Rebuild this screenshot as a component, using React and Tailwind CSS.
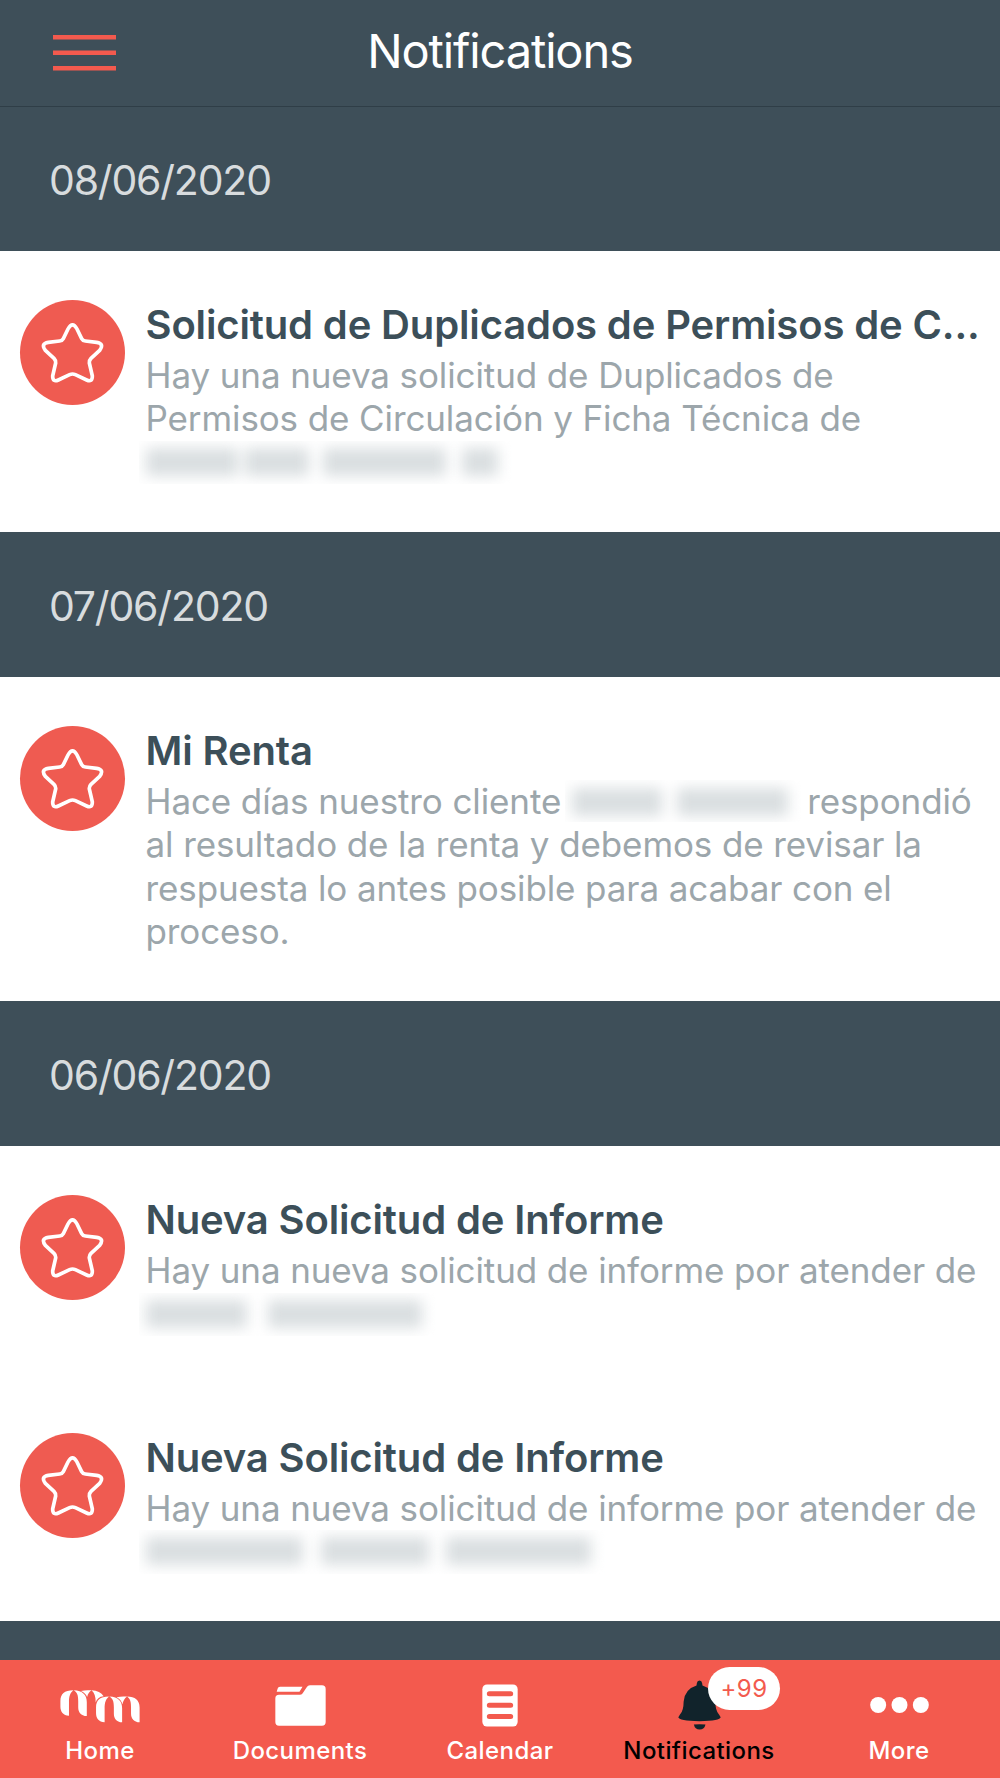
import React from 'react';

const groups = [
  {
    date: '08/06/2020',
    items: [
      {
        title: 'Solicitud de Duplicados de Permisos de C...',
        lines: [
          'Hay una nueva solicitud de Duplicados de',
          'Permisos de Circulación y Ficha Técnica de',
        ],
        hidden: 'company',
      },
    ],
  },
  {
    date: '07/06/2020',
    items: [
      {
        title: 'Mi Renta',
        lines: [
          <>Hace días nuestro cliente<HiddenClient />respondió</>,
          'al resultado de la renta y debemos de revisar la',
          'respuesta lo antes posible para acabar con el',
          'proceso.',
        ],
      },
    ],
  },
  {
    date: '06/06/2020',
    items: [
      {
        title: 'Nueva Solicitud de Informe',
        lines: ['Hay una nueva solicitud de informe por atender de'],
        hidden: 'short',
      },
      {
        title: 'Nueva Solicitud de Informe',
        lines: ['Hay una nueva solicitud de informe por atender de'],
        hidden: 'long',
      },
    ],
  },
];

const hiddenWords = {
  company: ['w-[92px]', 'ml-[7px] w-[64px]', 'ml-[14px] w-[123px]', 'ml-[16px] w-[36px]'],
  short: ['w-[101px]', 'ml-[21px] w-[154px]'],
  long: ['w-[157px]', 'ml-[18px] w-[108px]', 'ml-[17px] w-[145px]'],
};

// Blurred stand-in for a private name
function HiddenLine({ kind }) {
  return (
    <div className="-ml-[7px] flex h-[43.400px] w-[480px] overflow-hidden pl-[7px] pt-[7px]">
      <div className="flex blur-[7px]">
        {hiddenWords[kind].map((word) => (
          <span key={word} className={`h-[28px] bg-[#dadfe1] ${word}`} />
        ))}
      </div>
    </div>
  );
}

function HiddenClient() {
  return (
    <span className="ml-[4px] mr-[6px] inline-flex h-[42px] w-[236px] overflow-hidden pl-[7px] pt-[8px] align-top">
      <span className="flex blur-[7px]">
        <span className="h-[28px] w-[90px] bg-[#dadfe1]" />
        <span className="ml-[15px] h-[28px] w-[111px] bg-[#dadfe1]" />
      </span>
    </span>
  );
}

function StarBadge() {
  return (
    <div className="mt-[49px] h-[105px] w-[105px] shrink-0 rounded-full bg-[#ef5b51]">
      <svg viewBox="0 0 315 315" className="h-full w-full" fill="none" stroke="#fff" strokeWidth="11" strokeLinejoin="round">
        <path d="M144 87 Q157.5 62 171 87 L185 116 Q188 122 196 123 L230 127 Q254 131 239 151 L213 175 Q207 181 208 189 L217 228 Q217 248 200 240 L166 224 Q157.500 220 149 224 L115 240 Q98 248 98 228 L107 189 Q108 181 102 175 L76 151 Q61 131 85 127 L119 123 Q127 122 130 116 Z" />
      </svg>
    </div>
  );
}

function Notification({ item }) {
  return (
    <div className="flex pl-[20px]">
      <StarBadge />
      <div className="ml-[20.500px] pb-[47.800px] pt-[49px] whitespace-nowrap">
        <h2 className="h-[54px] text-[40px] font-semibold leading-[50px] tracking-[-0.140px] text-[#3c4f59]">{item.title}</h2>
        <div className="text-[35px] leading-[43.400px] tracking-[-0.110px] text-[#9ca6ab]">
          {item.lines.map((line, i) => (
            <p key={i} className="h-[43.400px]">{line}</p>
          ))}
          {item.hidden && <HiddenLine kind={item.hidden} />}
        </div>
      </div>
    </div>
  );
}

function DateBand({ date }) {
  return (
    <div className="flex h-[145px] items-center bg-[#3e4f59] pl-[49px] pt-[4px] text-[41px] tracking-[-1.200px] text-[#d8dcde]">{date}</div>
  );
}

function MenuIcon() {
  return (
    <svg viewBox="0 0 63 36" className="h-[36px] w-[63px]" fill="#f35a4e">
      <rect y="0" width="63" height="4.5" />
      <rect y="15.5" width="63" height="4.5" />
      <rect y="31" width="63" height="4.5" />
    </svg>
  );
}

function HomeIcon() {
  return (
    <svg viewBox="0 0 240 100" className="mt-[2px] h-[33px] w-[80px]" fill="#fff">
      <path d="M26 78 C8 77 0 66 0 50 V34 C0 12 12 1 39 1 C29 10 26 20 26 36 Z" />
      <path d="M40 1 C51 7 54 16 54 34 V52 C54 68 62 78 80 79 V36 C80 16 68 2 40 1 Z" />
      <path d="M62 3 C74 0 84 0 94 1 C88 5 83 12 81 21 Q76 9 62 3 Z" />
      <path d="M94 1 C112 2 124 8 131 19 C118 20 110 27 107 38 C107 20 103 8 94 1 Z" />
      <path d="M134 98 C116 97 108 86 108 70 V53 C108 31 120 20 147 20 C137 29 134 39 134 55 Z" />
      <path d="M148 20 C159 26 162 35 162 53 V71 C162 87 170 97 187 98 V55 C187 35 176 21 148 20 Z" />
      <path d="M170 22 C182 19 192 19 202 20 C194 26 190 34 188 43 Q184 28 170 22 Z" />
      <path d="M202 20 C226 20 240 31 240 53 V98 C223 97 214 87 214 71 V53 C214 37 212 27 202 20 Z" />
    </svg>
  );
}

function DocumentsIcon() {
  return (
    <svg viewBox="0 0 152 122" className="h-[41px] w-[51px]" fill="#fff">
      <path d="M5 20 L8 10 Q9 5 15 5 H82 L73 20 Z" />
      <path d="M12 29 H74 Q79 29 82 25 L95 6 Q98 1 104 1 H140 Q151 1 151 12 V110 Q151 121 140 121 H12 Q1 121 1 110 V40 Q1 29 12 29 Z" />
    </svg>
  );
}

function CalendarIcon() {
  return (
    <svg viewBox="0 0 108 128" className="h-[43px] w-[36px]">
      <rect x="1" y="1" width="106" height="126" rx="14" fill="#fff" />
      <path d="M22 29 H86 M22 63 H86 M22 97 H86" stroke="#f35a4e" strokeWidth="15" strokeLinecap="round" />
    </svg>
  );
}

function BellIcon() {
  return (
    <svg viewBox="0 0 130 150" className="h-[50px] w-[43px]" fill="#11232b">
      <path d="M57 9 Q58 1 65 1 Q72 1 73 9 L74 16 Q110 27 113 65 Q113 92 124 104 L129 112 Q128 123 65 124 Q2 123 1 112 L6 104 Q17 92 17 65 Q20 27 56 16 Z" />
      <path d="M48 134 Q65 132 83 134 Q80 149 65.500 149 Q51 149 48 134 Z" />
    </svg>
  );
}

function MoreIcon() {
  return (
    <svg viewBox="0 0 176 48" className="h-[16px] w-[59px]" fill="#fff">
      <circle cx="24" cy="24" r="24" />
      <circle cx="88" cy="24" r="24" />
      <circle cx="152" cy="24" r="24" />
    </svg>
  );
}

const tabs = [
  { name: 'Home', icon: <HomeIcon /> },
  { name: 'Documents', icon: <DocumentsIcon /> },
  { name: 'Calendar', icon: <CalendarIcon /> },
  { name: 'Notifications', icon: <BellIcon />, badge: '+99', active: true },
  { name: 'More', icon: <MoreIcon /> },
];

const tabClass = 'relative flex flex-col items-center text-[24px] font-medium leading-[30px] tracking-[0.420px]';

const App = () => {
  return (
    <div className="flex h-[1778px] w-[1000px] flex-col overflow-hidden bg-white font-['Inter','Liberation_Sans',sans-serif]">
      <header className="relative z-10 grid h-[106px] shrink-0 grid-cols-3 items-center bg-[#3e4f59] shadow-[0_1px_0_#2f3e47]">
        <button className="ml-[53px] w-[63px]">
          <MenuIcon />
        </button>
        <h1 className="pb-[3px] text-center text-[47px] tracking-[-1.150px] text-white">Notifications</h1>
      </header>

      <main className="min-h-0 flex-1 overflow-hidden bg-[#3e4f59]">
        {groups.map((group) => (
          <section key={group.date}>
            <DateBand date={group.date} />
            <div className="bg-white">
              {group.items.map((item, i) => (
                <Notification key={i} item={item} />
              ))}
            </div>
          </section>
        ))}
      </main>

      <nav className="grid h-[118px] shrink-0 grid-cols-5 bg-[#f35a4e]">
        {tabs.map((tab, i) => (
          <div key={tab.name} className={`${tabClass} ${tab.active ? 'text-black' : 'text-white'} ${i > 2 ? 'pr-[2px]' : ''}`}>
            <div className="flex h-[76px] items-center pt-[14px]">{tab.icon}</div>
            <span>{tab.name}</span>
            {tab.badge && (
              <span className="absolute left-[108px] top-[7px] flex h-[43px] w-[72px] items-center justify-center rounded-full bg-white pt-px text-[24px] font-normal text-[#f35a4e]">
                {tab.badge}
              </span>
            )}
          </div>
        ))}
      </nav>
    </div>
  );
};

export default App;
